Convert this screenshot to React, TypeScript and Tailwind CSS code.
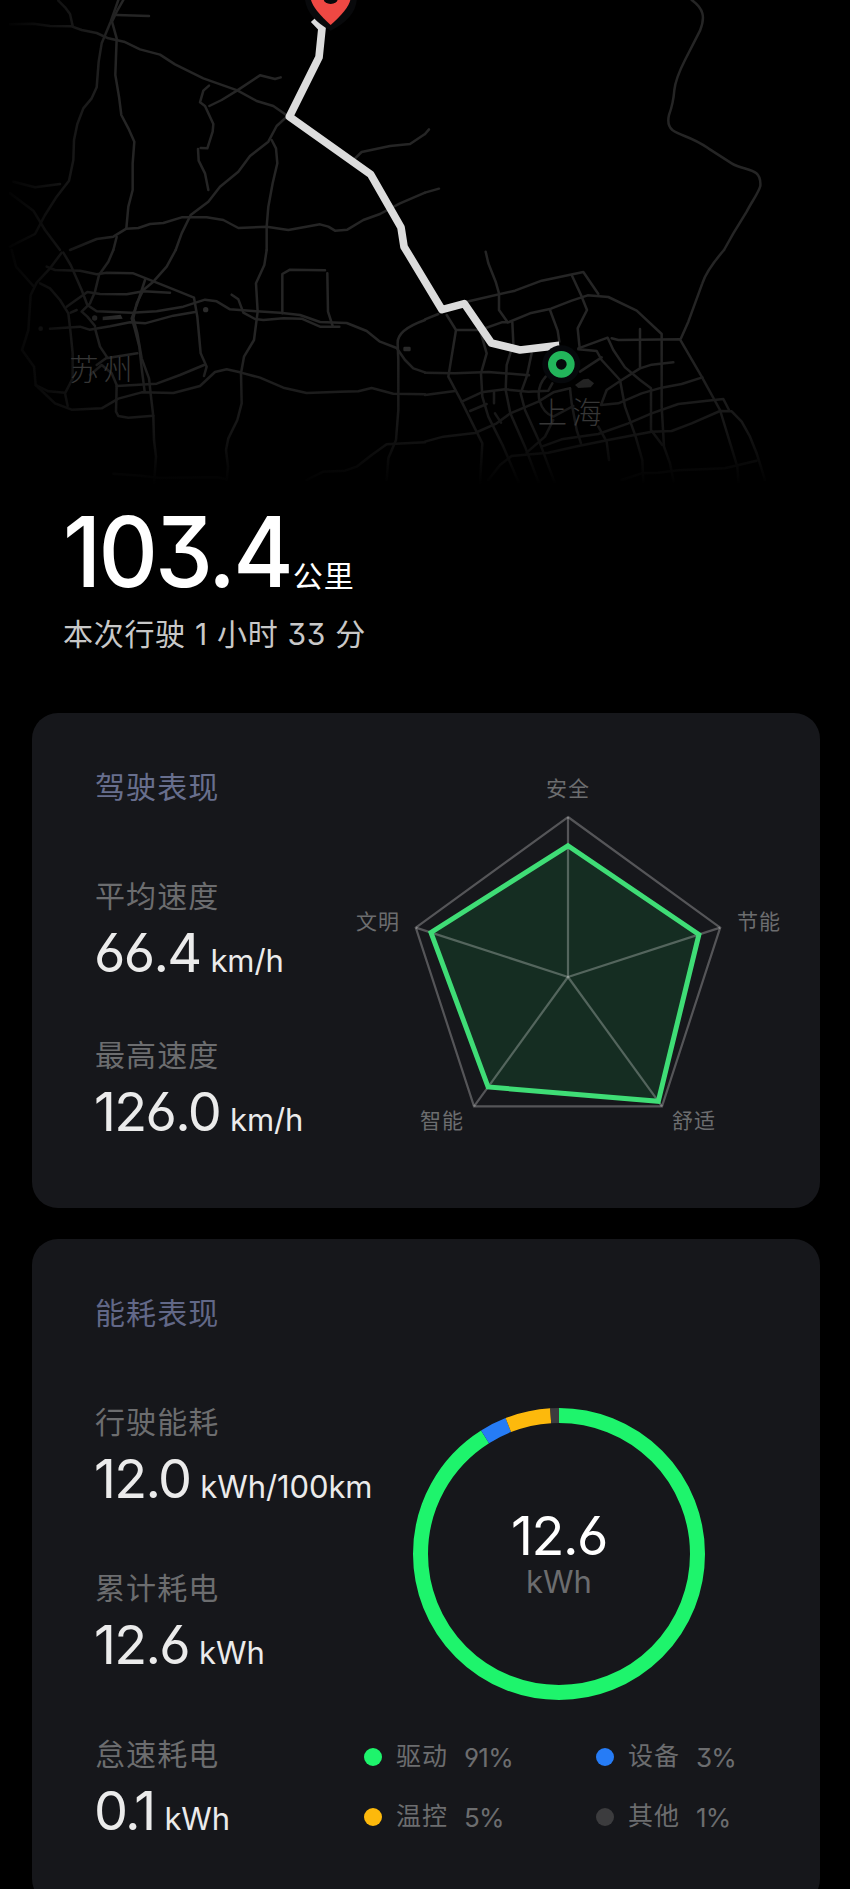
import clsx from 'clsx'

interface StatProps {
  label: string
  value: string
  unit: string
  className?: string
}

interface LegendItem {
  name: string
  percent: number
  color: string
  dot: string
}

const RADAR_CENTER = { x: 228, y: 237 }
const RADAR_RADIUS = 160

const RADAR_SCORES = [0.82, 0.86, 0.96, 0.85, 0.9]

const ENERGY: LegendItem[] = [
  { name: '驱动', percent: 91, color: '#1ef46c', dot: 'bg-[#1ef46c]' },
  { name: '设备', percent: 3, color: '#267cf6', dot: 'bg-[#267cf6]' },
  { name: '温控', percent: 5, color: '#fdb90c', dot: 'bg-[#fdb90c]' },
  { name: '其他', percent: 1, color: '#3c3c3e', dot: 'bg-[#3c3c3e]' },
]

const ROADS_NW = [
  'M30 73 L100 71 L150 78 L215 79 L245 90 L290 99 L325 115 L372 125 L420 148 L480 164 L525 193 L610 235 L712 271 L770 303 L820 318 L860 346',
  'M175 2 L195 22 L210 42 L218 78',
  'M355 0 L332 65 L305 130 L296 185 L290 262 L275 295 L250 325 L232 372 L222 420 L220 480 L207 542 L170 590 L135 645 L105 702 L65 722 L30 740',
  'M370 0 L350 35 L336 65 L350 115 L346 225 L357 290 L364 345 L385 385 L403 425 L398 490 L398 570 L385 620 L379 685',
  'M350 45 L447 48',
  'M627 257 L610 272 L600 307 L615 318 L640 372 L638 395 L622 445 L602 444 M594 447 L596 482 L615 520 L625 570',
  'M628 318 L665 300 L712 271 L780 226 L825 237 L842 232',
  'M855 355 L830 378 L805 425 L750 468 L715 515 L660 560 L625 605 L572 645 L545 700 L527 750',
  'M815 420 L828 445 L832 490 L818 550 L805 620 L800 680 L800 750',
  'M210 750 L290 717 L340 710 L379 686 L415 684 L450 672 L490 669 L545 652 L620 652 L670 660 L715 684 L800 680 L865 690 L960 673 L985 680 L1005 692 L1042 689 L1090 660 L1140 642 L1200 610 L1275 578',
  'M1065 475 L1085 456 L1170 438 L1230 432 L1275 402',
  'M40 545 L105 562 L180 552 M30 580 L100 632 L135 690 L180 750',
  'M350 711 L340 750',
]

const ROADS_NE = [
  'M800 0 C835 25 842 50 825 92 L780 180 Q752 235 748 270 Q745 310 732 345 Q725 375 742 390 C770 410 795 407 850 445 L920 490 C960 515 1010 500 1006 558 C1000 580 980 605 965 635 L925 700 L897 750',
  'M0 402 L12 388',
  'M0 578 L42 566',
]

const ROADS_SW = [
  'M340 0 L325 35 L297 75 L285 125 L270 160 L245 185 L262 200 L285 228',
  'M527 0 L500 50 L460 95 L430 120 L410 160 L400 205 L412 250 L425 325 L447 385 L453 440 L460 500 L462 570 L468 620 L462 700',
  'M140 50 L165 60 L240 62 L290 73 L320 68 L400 70 L470 98 L545 128 L582 143 L592 200 L602 310 L620 350 L612 378',
  'M190 8 L212 45 L245 120 L262 165 L290 184 L395 188 L470 184 L550 170 L615 149 L650 154 L690 178 L770 184 L840 188 L900 195 L960 216 L1040 219 L1100 243 L1140 275 L1190 294 L1215 330 L1240 355 L1275 367',
  'M435 90 L412 160 L395 205 L404 235 L418 290 L425 355 L434 425',
  'M200 170 L225 152 L262 126 L300 132 L380 133 L430 124 L510 128',
  'M120 100 L150 115 L180 150 L205 190 L212 250 L218 310 L218 385 L195 430 L203 468',
  'M230 180 L212 188 M150 236 L240 230 L268 239 L330 229 L390 217 L435 220 L520 197 L585 186',
  'M285 235 L300 290 L322 323',
  'M290 345 L318 325 L412 310',
  'M270 375 L305 345 L335 370 L350 405 L348 485 L355 498 L385 503 L460 497',
  'M350 408 L470 401 L540 375 L612 345',
  'M185 8 L150 55 L110 98 L92 135 L85 240 L66 300 L102 350 L107 405 L165 460 L215 479 L305 475 L355 446 L425 427 L520 429 L600 408 L645 366 L680 358 L720 367 L780 383 L850 413 L920 429 L1020 425 L1075 424 L1115 414 L1180 431 L1275 433',
  'M107 405 L145 424 L195 428',
  'M800 0 L793 45 L768 100 L773 185 L762 270 L732 320 L723 370 L725 460 L712 510 L685 565 L678 600 L684 650 L680 690',
  'M695 134 L715 148 L730 188 L765 207 L790 210 L850 205 L905 206 L960 230 L1018 230',
  'M847 190 V72 L870 59 L975 61 M982 70 L984 185 L998 228',
  'M1275 210 Q1190 240 1193 280 L1195 330 L1195 480 L1188 570 L1165 625 L1160 690',
  'M1275 577 L1188 581 L1160 583 L1115 615 L1070 650 L1035 662 L970 665 L920 690',
  'M340 671 L420 677 L480 684 L650 682 L680 688',
  'M35 0 L48 50 L100 108',
]

const ROADS_SE = [
  'M182 5 L190 40 L212 95 L222 130 L222 180 L248 217',
  'M125 155 L270 122 L350 92 L475 66 L520 132',
  'M0 208 L40 192 M65 195 L93 240 L70 380 L110 455 L172 580 L165 700',
  'M95 240 L165 240 L230 217 L250 217 L315 190 L378 176 L440 152 L488 136 L550 141 L635 182 L710 252 L710 470 L717 590 L735 640 L746 695',
  'M440 75 L468 135 L486 180 L458 235 L464 295',
  'M375 180 L398 242 L403 275',
  'M262 217 L265 280 L245 345 L242 420 L256 490 L300 590 L340 695',
  'M165 240 L185 310 L168 370 L172 440 L190 500 L235 590 L280 695',
  'M0 368 L90 370 L190 366 L312 376 M320 310 L305 380 L287 430 L300 480 L345 580 L388 695',
  'M110 455 L170 427 L240 418 L310 425 L370 422 L382 400 M362 380 Q335 410 343 450 Q355 490 385 500 L445 468',
  'M0 435 L90 423 M135 483 L185 462 M207 425 L207 460',
  'M210 490 L228 518',
  'M460 295 L548 263 L565 300 L600 352 L645 390 L678 415 L678 540 L712 585',
  'M560 265 L580 270 L765 268 L830 380 L885 480 L937 650 L940 695',
  'M897 0 Q845 60 832 100 L790 215 L768 265',
  'M645 237 V352 M745 337 L680 344 L645 355 L590 390 L545 420 L528 465 L580 460 L650 430 L710 413 L770 402 L832 382',
  'M460 298 L515 303 L530 330 L585 390 L600 470 L632 560 L652 630 L655 695',
  'M465 365 L530 322',
  'M0 575 L55 560 L150 549 L215 520 L256 490 L340 455 L385 427 L435 415',
  'M190 690 L225 645 L260 618 L370 608 L460 588 L550 570 L680 545 L740 543 L800 520 L885 483 L920 484 L950 515 L975 560 L995 610 L1020 690',
  'M305 608 L360 560 L385 510 M350 590 L410 568 L520 552 L610 520 L680 490 L760 462 L840 453 L895 447 L912 480',
  'M435 415 L440 460 L455 540 L468 580 M520 530 L545 575 L552 630',
  'M590 690 L650 670 L700 668 L760 661 L900 655 L995 632',
]

function RouteMap() {
  return (
    <svg viewBox="0 0 2550 1500" className="block h-[500px] w-[850px] shrink-0">
      <defs>
        <linearGradient id="fadeBottom" x1="0" y1="0" x2="0" y2="1">
          <stop offset="0.68" stopColor="#000" stopOpacity="0" />
          <stop offset="0.85" stopColor="#000" stopOpacity="0.4" />
          <stop offset="0.97" stopColor="#000" />
        </linearGradient>
        <linearGradient id="fadeLeft" x1="0" y1="0" x2="1" y2="0">
          <stop offset="0" stopColor="#000" />
          <stop offset="1" stopColor="#000" stopOpacity="0" />
        </linearGradient>
      </defs>

      {/* Roads, one group per quarter of the map */}
      <g fill="none" stroke="#252525" strokeWidth="7.5" strokeLinecap="round" strokeLinejoin="round">
        {ROADS_NW.map((d) => <path key={d} d={d} />)}
        <g transform="translate(1275 0)">{ROADS_NE.map((d) => <path key={d} d={d} />)}</g>
        <g transform="translate(0 750)">{ROADS_SW.map((d) => <path key={d} d={d} />)}</g>
        <g transform="translate(1275 750)">{ROADS_SE.map((d) => <path key={d} d={d} />)}</g>
      </g>

      {/* Small lakes and landmarks */}
      <g fill="#2b2b2b">
        <path d="M308 950 L362 944 L368 956 L308 961Z" />
        <circle cx="284" cy="954" r="8" />
        <circle cx="617" cy="929" r="8" />
        <circle cx="122" cy="986" r="7" />
        <rect x="1210" y="1040" width="22" height="14" rx="4" />
        <path d="M1725 1155 L1750 1138 L1765 1136 L1782 1150 L1772 1162 L1735 1164Z" />
      </g>

      <rect width="360" height="1500" fill="url(#fadeLeft)" />
      <rect width="2550" height="1500" fill="url(#fadeBottom)" />
      <g fill="#363636" fontSize="88" fontWeight="300">
        <text x="208" y="1140" letterSpacing="14">苏州</text>
        <text x="1613" y="1268" letterSpacing="16">上海</text>
      </g>

      {/* Driven route */}
      <path
        d="M941 58 L966 84 L957 172 L868 350 L1112 523 L1203 682 L1212 740 L1326 929 L1393 911 L1474 1029 L1560 1050 L1678 1036"
        fill="none"
        stroke="#dcdcdc"
        strokeWidth="23"
        strokeLinejoin="round"
      />
      <path d="M915 -30 Q905 45 992 92 Q1085 45 1068 -30Z" fill="#08090b" />
      <path d="M933 0 Q940 28 992 75 Q1045 28 1051 0 V-20 H933Z" fill="#ef4843" />
      <ellipse cx="992" cy="-6" rx="22" ry="18" fill="#08090b" />

      <circle cx="1684" cy="1093" r="57" fill="#06080b" />
      <circle cx="1684" cy="1093" r="28" fill="none" stroke="#22b55b" strokeWidth="24" />
    </svg>
  )
}

function Stat({ label, value, unit, className }: StatProps) {
  return (
    <div className={className}>
      <div className="text-[30px] leading-[38px] tracking-[1.1px] text-[#6c6d6f]">{label}</div>
      <div className="-ml-px flex items-baseline whitespace-nowrap text-[#ebebeb]">
        <span className="text-[54px] leading-[76px] tracking-[-1.7px]">{value}</span>
        <span className="ml-2.5 text-[31px] tracking-[-0.1px]">{unit}</span>
      </div>
    </div>
  )
}

function RadarChart() {
  const point = (index: number, score: number) => {
    const angle = ((index * 72 - 90) * Math.PI) / 180
    const x = RADAR_CENTER.x + Math.cos(angle) * RADAR_RADIUS * score
    const y = RADAR_CENTER.y + Math.sin(angle) * RADAR_RADIUS * score
    return `${x.toFixed(1)},${y.toFixed(1)}`
  }
  const outline = RADAR_SCORES.map((_, i) => point(i, 1)).join(' ')
  const scores = RADAR_SCORES.map((score, i) => point(i, score)).join(' ')

  return (
    <svg viewBox="0 0 456 420" className="h-[420px] w-[456px] shrink-0">
      <polygon points={scores} fill="#152d22" />
      <g fill="none" stroke="#fff" strokeOpacity="0.27" strokeWidth="2.2">
        <polygon points={outline} />
        {RADAR_SCORES.map((_, i) => (
          <polyline key={i} points={`${RADAR_CENTER.x},${RADAR_CENTER.y} ${point(i, 1)}`} />
        ))}
      </g>
      <polygon points={scores} fill="none" stroke="#3fdd76" strokeWidth="5" />
      <g fill="#6c6d6f" fontSize="21" letterSpacing="1">
        <text x="206" y="56">安全</text>
        <text x="397" y="189">节能</text>
        <text x="332" y="388">舒适</text>
        <text x="80" y="388">智能</text>
        <text x="16" y="189">文明</text>
      </g>
    </svg>
  )
}

function EnergyRing() {
  const radius = 138.5
  const length = 2 * Math.PI * radius
  let start = 0

  return (
    <div className="relative ml-[51px] size-[292px]">
      <svg viewBox="0 0 292 292" className="size-full -rotate-90">
        {ENERGY.map(({ name, percent, color }) => {
          const offset = start
          start += percent
          return (
            <circle
              key={name}
              cx="146"
              cy="146"
              r={radius}
              fill="none"
              stroke={color}
              strokeWidth="15"
              strokeDasharray={`${(length * percent) / 100} ${length}`}
              strokeDashoffset={(-length * offset) / 100}
            />
          )
        })}
      </svg>
      <div className="absolute inset-0 flex flex-col items-center pt-[102px]">
        <span className="text-[54px] leading-[52px] tracking-[-1.5px] text-white">12.6</span>
        <span className="text-[31px] leading-[40px] text-[#6c6d6f]">kWh</span>
      </div>
    </div>
  )
}

export default function App() {
  return (
    <main className="flex h-[1889px] w-[850px] flex-col overflow-hidden bg-black font-['Inter','Noto_Sans_CJK_SC',sans-serif] font-normal [font-feature-settings:'cv03','cv04','cv09']">
      <RouteMap />

      <header className="h-[213px] shrink-0 pl-[63px] text-white">
        <div className="-mt-[2px] flex h-[108px] items-baseline">
          <span className="-mr-[12px] origin-left scale-x-95 text-[97px] leading-[108px] font-medium tracking-[-3px]">
            103.4
          </span>
          <span className="ml-[2px] text-[30px] tracking-[1px]">公里</span>
        </div>
        <p className="mt-[6px] text-[30px] leading-[44px] tracking-[0.7px] text-[#c8c8c8]">
          本次行驶 1 小时 33 分
        </p>
      </header>

      <section className="mr-[30px] ml-8 flex h-[495px] shrink-0 rounded-[26px] bg-[#16171b]">
        <div className="w-[276px] shrink-0 pt-[54px] pl-[63px]">
          <h2 className="text-[30px] leading-[40px] tracking-[1.1px] text-[#686f8e]">驾驶表现</h2>
          <Stat className="mt-[70px]" label="平均速度" value="66.4" unit="km/h" />
          <Stat className="mt-[45px]" label="最高速度" value="126.0" unit="km/h" />
        </div>
        <div className="pt-[27px] pl-[32px]">
          <RadarChart />
        </div>
      </section>

      <section className="mr-[30px] ml-8 mt-[31px] flex h-[666px] shrink-0 rounded-[26px] bg-[#16171b]">
        <div className="w-[330px] shrink-0 pt-[54px] pl-[63px]">
          <h2 className="text-[30px] leading-[40px] tracking-[1.1px] text-[#626888]">能耗表现</h2>
          <Stat className="mt-[70px]" label="行驶能耗" value="12.0" unit="kWh/100km" />
          <Stat className="mt-[52px]" label="累计耗电" value="12.6" unit="kWh" />
          <Stat className="mt-[52px]" label="怠速耗电" value="0.1" unit="kWh" />
        </div>
        <div className="pt-[169px]">
          <EnergyRing />
          <div className="mt-[27px] ml-[2px] grid grid-cols-[232px_180px]">
            {ENERGY.map(({ name, percent, dot }) => (
              <div key={name} className="flex h-[60px] items-center text-[25px] text-[#6c6d6f]">
                <i className={clsx('mr-3.5 size-[18px] rounded-full', dot)} />
                <span className="tracking-[1px]">{name}</span>
                <span className="ml-[16px] text-[26px] tracking-[-0.8px]">{percent}%</span>
              </div>
            ))}
          </div>
        </div>
      </section>
    </main>
  )
}
